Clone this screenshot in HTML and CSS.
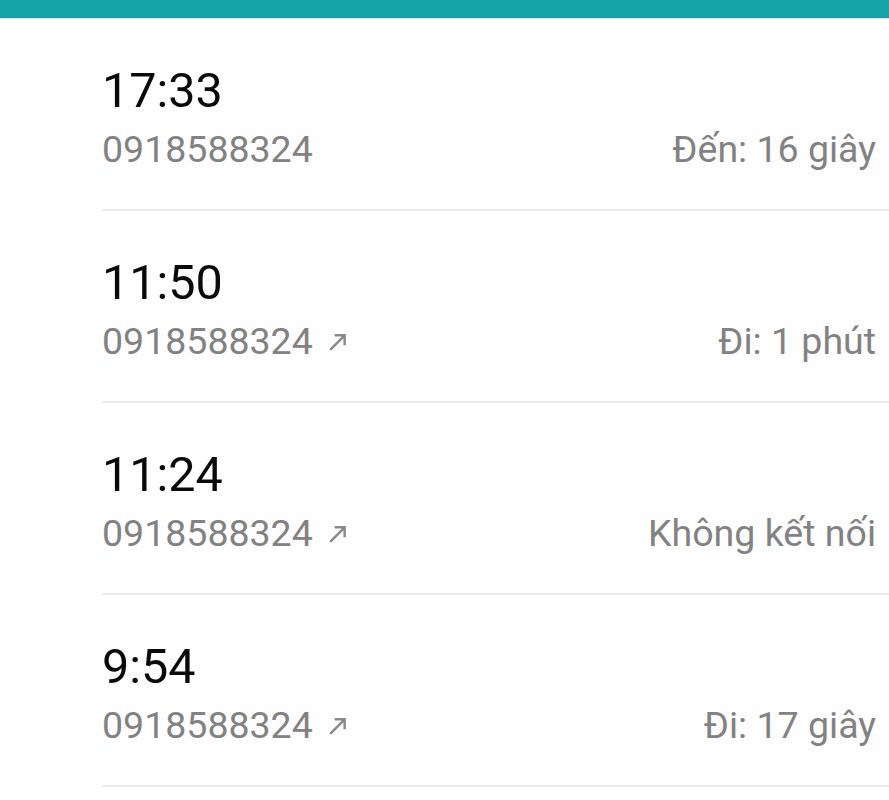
FILE: index.html
```html
<!DOCTYPE html>
<html lang="vi">
<head>
    <meta charset="UTF-8">
    <meta name="viewport" content="width=device-width, initial-scale=1.0">
    <title>Nhật ký cuộc gọi</title>
    <link rel="stylesheet" href="styles.css">
</head>
<body>
    <div class="topbar"></div>
    <div class="callList">
        <div class="call">
            <div class="time">17:33</div>
            <div class="info">
                <span class="number">0918588324</span>
                <span class="status">Đến: 16 giây</span>
            </div>
        </div>
        <div class="call">
            <div class="time">11:50</div>
            <div class="info">
                <span class="number">0918588324
                    <svg class="arrow" viewBox="0 0 18 18"><path d="M2 16 L15 3 M6 3 H15 V12"/></svg>
                </span>
                <span class="status">Đi: 1 phút</span>
            </div>
        </div>
        <div class="call">
            <div class="time">11:24</div>
            <div class="info">
                <span class="number">0918588324
                    <svg class="arrow" viewBox="0 0 18 18"><path d="M2 16 L15 3 M6 3 H15 V12"/></svg>
                </span>
                <span class="status">Không kết nối</span>
            </div>
        </div>
        <div class="call">
            <div class="time">9:54</div>
            <div class="info">
                <span class="number">0918588324
                    <svg class="arrow" viewBox="0 0 18 18"><path d="M2 16 L15 3 M6 3 H15 V12"/></svg>
                </span>
                <span class="status">Đi: 17 giây</span>
            </div>
        </div>
    </div>
</body>
</html>
```

FILE: styles.css
```css
body{
    margin: 0;
    background-color: #fefefe;
    font-family: Roboto, "Noto Sans", sans-serif;
    overflow: hidden;
}
.topbar{
    height: 18px;
    background-color: #14a3a8;
    border-bottom: 1px solid #c9eaea;
}
.callList{
    margin-left: 102px;
}
.call{
    height: 192px;
    box-sizing: border-box;
    padding-top: 44px;
    padding-right: 13px;
    border-bottom: 2px solid #ebebeb;
}
.time{
    font-size: 48.5px;
    line-height: 56px;
    color: #0a0a0a;
}
.info{
    display: flex;
    justify-content: space-between;
    align-items: baseline;
    margin-top: 8px;
    font-size: 37.5px;
    line-height: 44px;
    color: #828282;
}
.number{
    display: flex;
    align-items: center;
    gap: 15px;
}
.arrow{
    width: 20px;
    height: 20px;
    fill: none;
    stroke: #8a8a8a;
    stroke-width: 2.2;
    margin-top: 2px;
}
```
